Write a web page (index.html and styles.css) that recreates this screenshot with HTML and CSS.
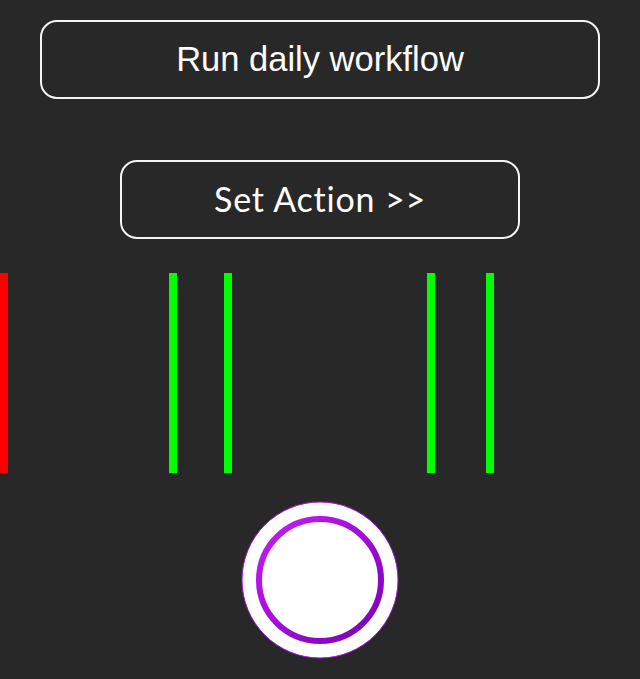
FILE: index.html
```html
<!DOCTYPE html>
<html>
<head>
<meta charset="utf-8">
<link rel="stylesheet" href="styles.css">
</head>
<body>
<div class="screen">
  <div class="btn btn-wide">Run daily workflow</div>
  <div class="btn btn-action">Set Action &gt;&gt;</div>
  <div class="bars">
    <div class="bar red" style="margin-left:0px"></div>
    <div class="bar green" style="margin-left:161px"></div>
    <div class="bar green" style="margin-left:47px"></div>
    <div class="bar green" style="margin-left:195px"></div>
    <div class="bar green" style="margin-left:51px"></div>
  </div>
  <div class="record">
    <svg width="158" height="158" viewBox="0 0 158 158">
      <defs>
        <linearGradient id="g" x1="0" y1="0" x2="1" y2="1">
          <stop offset="0" stop-color="#c81cf5"/>
          <stop offset="1" stop-color="#7a00b8"/>
        </linearGradient>
      </defs>
      <circle cx="79" cy="79" r="78" fill="#ffffff" stroke="#a010e0" stroke-width="1"/>
      <circle cx="79" cy="79" r="61" fill="#ffffff" stroke="url(#g)" stroke-width="6"/>
    </svg>
  </div>
</div>
</body>
</html>
```
FILE: styles.css
```css
html, body {
  margin: 0;
  padding: 0;
  background: #282828;
}
.screen {
  width: 640px;
  height: 679px;
  display: flex;
  flex-direction: column;
  padding-top: 20px;
  box-sizing: border-box;
}
.btn {
  box-sizing: border-box;
  height: 79px;
  border: 2px solid #f4f4f4;
  border-radius: 17px;
  color: #ffffff;
  display: flex;
  align-items: center;
  justify-content: center;
}
.btn-wide {
  margin-left: 40px;
  width: 560px;
  font-family: "Liberation Sans", Arial, sans-serif;
  font-size: 34.5px;
}
.btn-action {
  margin-top: 61px;
  margin-left: 120px;
  width: 400px;
  font-family: Lato, "Noto Sans", sans-serif;
  font-weight: 400;
  font-size: 34px;
  letter-spacing: 0.8px;
  padding-bottom: 3px;
}
.bars {
  margin-top: 34px;
  height: 200px;
  display: flex;
}
.bar {
  width: 8px;
  height: 200px;
}
.red { background: #ff0000; }
.green { background: #00ff00; }
.record {
  margin-top: 28px;
  display: flex;
  justify-content: center;
}
.record svg { display: block; }
```
